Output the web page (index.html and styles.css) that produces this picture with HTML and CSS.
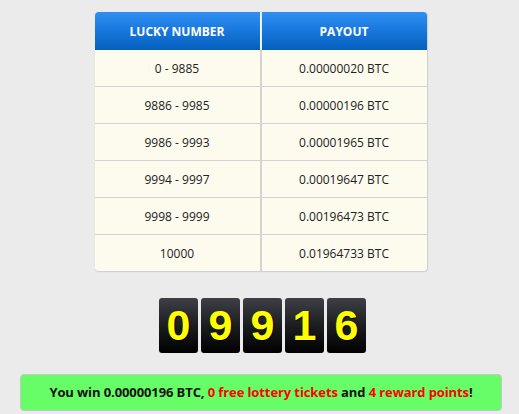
FILE: index.html
```html
<!DOCTYPE html>
<html>
<head>
<meta charset="utf-8">
<link rel="stylesheet" href="styles.css">
</head>
<body>
<div class="page">
  <table class="payout">
    <thead>
      <tr><th>Lucky Number</th><th>Payout</th></tr>
    </thead>
    <tbody>
      <tr><td>0 - 9885</td><td>0.00000020 BTC</td></tr>
      <tr><td>9886 - 9985</td><td>0.00000196 BTC</td></tr>
      <tr><td>9986 - 9993</td><td>0.00001965 BTC</td></tr>
      <tr><td>9994 - 9997</td><td>0.00019647 BTC</td></tr>
      <tr><td>9998 - 9999</td><td>0.00196473 BTC</td></tr>
      <tr><td>10000</td><td>0.01964733 BTC</td></tr>
    </tbody>
  </table>
  <div class="digits">
    <span class="digit">0</span><span class="digit">9</span><span class="digit">9</span><span class="digit">1</span><span class="digit">6</span>
  </div>
  <div class="win">You win 0.00000196 BTC, <span class="red">0 free lottery tickets</span> and <span class="red">4 reward points</span>!</div>
</div>
</body>
</html>
```
FILE: styles.css
```css
html, body {
  margin: 0;
  padding: 0;
  background: #ebebeb;
}
body {
  font-family: "Open Sans", "DejaVu Sans", sans-serif;
  width: 519px;
  height: 414px;
  overflow: hidden;
}
.page {
  padding-top: 12px;
  display: flex;
  flex-direction: column;
  align-items: center;
}
.payout {
  margin-left: 3px;
  border-collapse: separate;
  border-spacing: 0;
  width: 333px;
  table-layout: fixed;
  border-radius: 4px;
  border-right: 1px solid #d0d0d0;
  border-bottom: 1px solid #d0d0d0;
  box-shadow: 0 0 1px rgba(0,0,0,0.15);
}
.payout th {
  height: 38px;
  padding: 0;
  color: #fff;
  font-weight: 700;
  font-size: 12px;
  text-transform: uppercase;
  background: linear-gradient(to bottom, #2f8ff2 0%, #1877dc 50%, #0460be 100%);
}
.payout th:first-child {
  border-top-left-radius: 4px;
  border-right: 1px solid #ffffff;
}
.payout th:last-child {
  border-top-right-radius: 4px;
  border-left: 1px solid #e8e8e8;
}
.payout td {
  height: 36px;
  padding: 0;
  text-align: center;
  font-size: 12px;
  color: #222;
  background: #fcfbee;
  border-bottom: 1px solid #d3d3d3;
}
.payout td:first-child {
  border-right: 1px solid #d3d3d3;
}
.payout td:last-child {
  border-left: 1px solid #d3d3d3;
}
.payout tbody tr:last-child td {
  border-bottom: none;
}
.payout tbody tr:last-child td:first-child {
  border-bottom-left-radius: 4px;
}
.payout tbody tr:last-child td:last-child {
  border-bottom-right-radius: 4px;
}
.digits {
  margin-top: 26px;
  margin-left: 6px;
  display: flex;
  gap: 3px;
}
.digit {
  width: 39px;
  height: 55px;
  border-radius: 3px;
  background: linear-gradient(to bottom, #3d4046 0%, #1c1d20 50%, #000 100%);
  color: #ffff00;
  font-family: "Liberation Sans", Arial, sans-serif;
  font-weight: 700;
  font-size: 43px;
  line-height: 55px;
  text-align: center;
  text-shadow: 1px 1px 1px rgba(0,0,0,0.8);
}
.win {
  margin-top: 21px;
  margin-left: 3px;
  width: 480px;
  height: 35px;
  box-sizing: content-box;
  border: 1px solid #c6c6c6;
  border-radius: 4px;
  background: #66fd66;
  color: #111;
  font-weight: 700;
  font-size: 13px;
  letter-spacing: -0.1px;
  line-height: 35px;
  text-align: center;
}
.red {
  color: #ff0000;
}
```
